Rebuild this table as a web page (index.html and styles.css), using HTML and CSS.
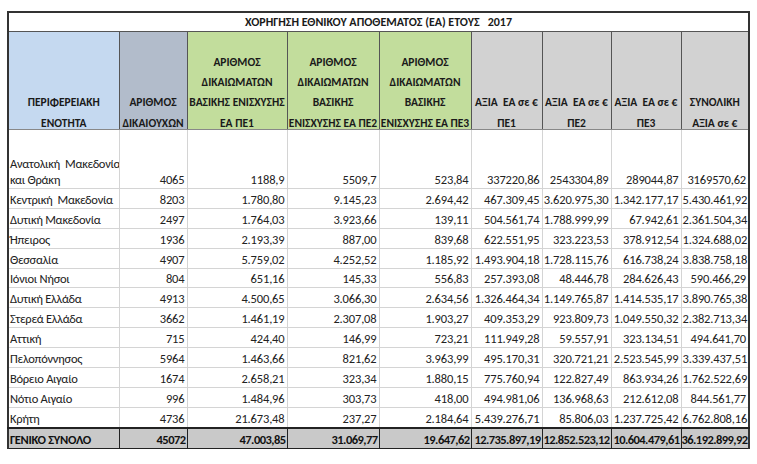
FILE: index.html
```html
<!DOCTYPE html>
<html lang="el">
<head>
<meta charset="utf-8">
<title>Χορήγηση Εθνικού Αποθέματος 2017</title>
<link rel="stylesheet" href="styles.css">
</head>
<body>
<div class="sheet">
<table class="grid">
<colgroup>
<col class="c-region"><col class="c-count"><col class="c-pe1"><col class="c-pe2"><col class="c-pe3"><col class="c-v1"><col class="c-v2"><col class="c-v3"><col class="c-tot">
</colgroup>
<thead>
<tr class="title-row"><th colspan="9">ΧΟΡΗΓΗΣΗ ΕΘΝΙΚΟΥ ΑΠΟΘΕΜΑΤΟΣ (ΕΑ) ΕΤΟΥΣ &nbsp; 2017</th></tr>
<tr class="head-row">
<th class="h-blue"><span class="lbl">ΠΕΡΙΦΕΡΕΙΑΚΗ<br>ΕΝΟΤΗΤΑ</span></th>
<th class="h-slate"><span class="lbl">ΑΡΙΘΜΟΣ<br>ΔΙΚΑΙΟΥΧΩΝ</span></th>
<th class="h-green"><span class="lbl">ΑΡΙΘΜΟΣ<br>ΔΙΚΑΙΩΜΑΤΩΝ<br>ΒΑΣΙΚΗΣ ΕΝΙΣΧΥΣΗΣ<br>ΕΑ ΠΕ1</span></th>
<th class="h-green"><span class="lbl">ΑΡΙΘΜΟΣ<br>ΔΙΚΑΙΩΜΑΤΩΝ<br>ΒΑΣΙΚΗΣ<br>ΕΝΙΣΧΥΣΗΣ ΕΑ ΠΕ2</span></th>
<th class="h-green"><span class="lbl">ΑΡΙΘΜΟΣ<br>ΔΙΚΑΙΩΜΑΤΩΝ<br>ΒΑΣΙΚΗΣ<br>ΕΝΙΣΧΥΣΗΣ ΕΑ ΠΕ3</span></th>
<th class="h-grey"><span class="lbl">ΑΞΙΑ &nbsp;ΕΑ σε €<br>ΠΕ1</span></th>
<th class="h-grey"><span class="lbl">ΑΞΙΑ &nbsp;ΕΑ σε €<br>ΠΕ2</span></th>
<th class="h-grey"><span class="lbl">ΑΞΙΑ &nbsp;ΕΑ σε €<br>ΠΕ3</span></th>
<th class="h-grey"><span class="lbl">ΣΥΝΟΛΙΚΗ<br>ΑΞΙΑ σε €</span></th>
</tr>
</thead>
<tbody>
<tr class="tall"><td class="name">Ανατολική &nbsp;Μακεδονία<br>και Θράκη</td><td>4065</td><td>1188,9</td><td>5509,7</td><td>523,84</td><td>337220,86</td><td>2543304,89</td><td>289044,87</td><td>3169570,62</td></tr>
<tr><td class="name">Κεντρική &nbsp;Μακεδονία</td><td>8203</td><td>1.780,80</td><td>9.145,23</td><td>2.694,42</td><td>467.309,45</td><td>3.620.975,30</td><td>1.342.177,17</td><td>5.430.461,92</td></tr>
<tr><td class="name">Δυτική Μακεδονία</td><td>2497</td><td>1.764,03</td><td>3.923,66</td><td>139,11</td><td>504.561,74</td><td>1.788.999,99</td><td>67.942,61</td><td>2.361.504,34</td></tr>
<tr><td class="name">Ήπειρος</td><td>1936</td><td>2.193,39</td><td>887,00</td><td>839,68</td><td>622.551,95</td><td>323.223,53</td><td>378.912,54</td><td>1.324.688,02</td></tr>
<tr><td class="name">Θεσσαλία</td><td>4907</td><td>5.759,02</td><td>4.252,52</td><td>1.185,92</td><td>1.493.904,18</td><td>1.728.115,76</td><td>616.738,24</td><td>3.838.758,18</td></tr>
<tr><td class="name">Ιόνιοι Νήσοι</td><td>804</td><td>651,16</td><td>145,33</td><td>556,83</td><td>257.393,08</td><td>48.446,78</td><td>284.626,43</td><td>590.466,29</td></tr>
<tr><td class="name">Δυτική Ελλάδα</td><td>4913</td><td>4.500,65</td><td>3.066,30</td><td>2.634,56</td><td>1.326.464,34</td><td>1.149.765,87</td><td>1.414.535,17</td><td>3.890.765,38</td></tr>
<tr><td class="name">Στερεά Ελλάδα</td><td>3662</td><td>1.461,19</td><td>2.307,08</td><td>1.903,27</td><td>409.353,29</td><td>923.809,73</td><td>1.049.550,32</td><td>2.382.713,34</td></tr>
<tr><td class="name">Αττική</td><td>715</td><td>424,40</td><td>146,99</td><td>723,21</td><td>111.949,28</td><td>59.557,91</td><td>323.134,51</td><td>494.641,70</td></tr>
<tr><td class="name">Πελοπόννησος</td><td>5964</td><td>1.463,66</td><td>821,62</td><td>3.963,99</td><td>495.170,31</td><td>320.721,21</td><td>2.523.545,99</td><td>3.339.437,51</td></tr>
<tr><td class="name">Βόρειο Αιγαίο</td><td>1674</td><td>2.658,21</td><td>323,34</td><td>1.880,15</td><td>775.760,94</td><td>122.827,49</td><td>863.934,26</td><td>1.762.522,69</td></tr>
<tr><td class="name">Νότιο Αιγαίο</td><td>996</td><td>1.484,96</td><td>303,73</td><td>418,00</td><td>494.981,06</td><td>136.968,63</td><td>212.612,08</td><td>844.561,77</td></tr>
<tr><td class="name">Κρήτη</td><td>4736</td><td>21.673,48</td><td>237,27</td><td>2.184,64</td><td>5.439.276,71</td><td>85.806,03</td><td>1.237.725,42</td><td>6.762.808,16</td></tr>
<tr class="total"><td class="name">ΓΕΝΙΚΟ ΣΥΝΟΛΟ</td><td>45072</td><td>47.003,85</td><td>31.069,77</td><td>19.647,62</td><td>12.735.897,19</td><td>12.852.523,12</td><td>10.604.479,61</td><td>36.192.899,92</td></tr>
</tbody>
</table>
</div>
</body>
</html>
```

FILE: styles.css
```css
html, body {
  margin: 0;
  padding: 0;
  background: #ffffff;
}

.sheet {
  padding: 11px 0 0 7px;
}

.grid {
  border-collapse: collapse;
  table-layout: fixed;
  width: 741px;
  font-family: Carlito, Calibri, "Liberation Sans Narrow", "DejaVu Sans Condensed", sans-serif;
  font-size: 12.5px;
  color: #222222;
  border-left: 2px solid #333333;
  border-right: 2px solid #333333;
}

.c-region { width: 111px; }
.c-count { width: 68px; }
.c-pe1 { width: 100px; }
.c-pe2 { width: 92px; }
.c-pe3 { width: 92px; }
.c-v1 { width: 71px; }
.c-v2 { width: 69px; }
.c-v3 { width: 70px; }
.c-tot { width: 68px; }

.title-row th {
  height: 18px;
  padding: 0;
  font-weight: bold;
  font-size: 12px;
  text-align: center;
  vertical-align: middle;
  border-top: 2px solid #333333;
  border-bottom: 1px solid #555555;
  color: #1a1a1a;
}

.head-row th {
  height: 97px;
  padding: 0;
  font-weight: bold;
  font-size: 11.5px;
  line-height: 20.3px;
  text-align: center;
  vertical-align: bottom;
  color: #1a1a1a;
  border: 1px solid #555555;
  border-bottom: 1px solid #888888;
}

.head-row .lbl {
  display: block;
  margin-bottom: -4px;
}

.h-blue { background: #c5d9f0; }
.h-slate { background: #b2bccb; }
.h-green { background: #c2dd9c; }
.h-grey { background: #d2d2d2; }

tbody td {
  height: 18.9px;
  padding: 0 2px 0 1px;
  text-align: right;
  vertical-align: bottom;
  line-height: 16px;
  border: 1px solid #d4d4d4;
  white-space: nowrap;
  overflow: hidden;
  letter-spacing: -0.15px;
}

tbody td.name {
  text-align: left;
  letter-spacing: -0.3px;
}

tbody tr.tall td {
  height: 58px;
}

tbody tr.total td {
  background: #c9c9c9;
  font-weight: bold;
  color: #111111;
  border: 1px solid #222222;
  border-top: 2px solid #222222;
  padding: 0 1px 0 0;
  letter-spacing: -0.55px;
}

tbody tr.total td.name {
  padding-left: 1px;
  letter-spacing: -0.3px;
}
```
